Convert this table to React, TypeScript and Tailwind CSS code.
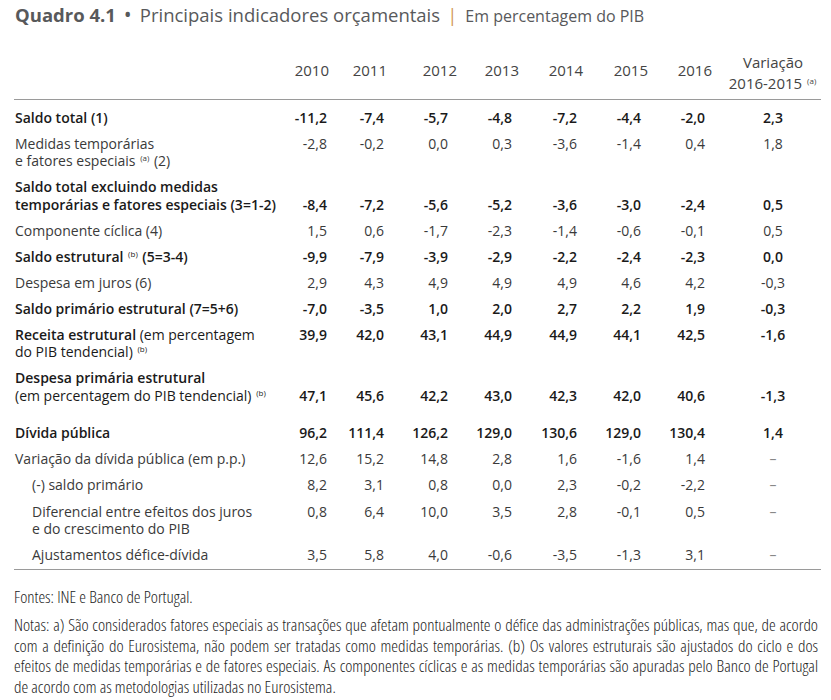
import React from "react";

type Row = {
  label: React.ReactNode;
  vals: string[];
  bold?: boolean;
  bottom?: boolean;
  indent?: boolean;
  gap?: boolean;
};

const Sup = ({ c }: { c: string }) => (
  <span className="relative -top-[5px] text-[8px] leading-none font-normal mx-[1px]">({c})</span>
);

const rows: Row[] = [
  { label: "Saldo total (1)", vals: ["-11,2", "-7,4", "-5,7", "-4,8", "-7,2", "-4,4", "-2,0", "2,3"], bold: true },
  {
    label: (
      <>
        Medidas temporárias
        <br />e fatores especiais <Sup c="a" /> (2)
      </>
    ),
    vals: ["-2,8", "-0,2", "0,0", "0,3", "-3,6", "-1,4", "0,4", "1,8"],
  },
  {
    label: (
      <>
        Saldo total excluindo medidas
        <br />
        temporárias e fatores especiais (3=1-2)
      </>
    ),
    vals: ["-8,4", "-7,2", "-5,6", "-5,2", "-3,6", "-3,0", "-2,4", "0,5"],
    bold: true,
    bottom: true,
  },
  { label: "Componente cíclica (4)", vals: ["1,5", "0,6", "-1,7", "-2,3", "-1,4", "-0,6", "-0,1", "0,5"] },
  {
    label: (
      <>
        Saldo estrutural <Sup c="b" /> (5=3-4)
      </>
    ),
    vals: ["-9,9", "-7,9", "-3,9", "-2,9", "-2,2", "-2,4", "-2,3", "0,0"],
    bold: true,
  },
  { label: "Despesa em juros (6)", vals: ["2,9", "4,3", "4,9", "4,9", "4,9", "4,6", "4,2", "-0,3"] },
  { label: "Saldo primário estrutural (7=5+6)", vals: ["-7,0", "-3,5", "1,0", "2,0", "2,7", "2,2", "1,9", "-0,3"], bold: true },
  {
    label: (
      <>
        Receita estrutural <span className="font-normal">(em percentagem</span>
        <br />
        <span className="font-normal">
          do PIB tendencial) <Sup c="b" />
        </span>
      </>
    ),
    vals: ["39,9", "42,0", "43,1", "44,9", "44,9", "44,1", "42,5", "-1,6"],
    bold: true,
  },
  {
    label: (
      <>
        Despesa primária estrutural
        <br />
        <span className="font-normal">
          (em percentagem do PIB tendencial) <Sup c="b" />
        </span>
      </>
    ),
    vals: ["47,1", "45,6", "42,2", "43,0", "42,3", "42,0", "40,6", "-1,3"],
    bold: true,
    bottom: true,
  },
  { label: "Dívida pública", vals: ["96,2", "111,4", "126,2", "129,0", "130,6", "129,0", "130,4", "1,4"], bold: true, gap: true },
  { label: "Variação da dívida pública (em p.p.)", vals: ["12,6", "15,2", "14,8", "2,8", "1,6", "-1,6", "1,4", "–"] },
  { label: "(-) saldo primário", vals: ["8,2", "3,1", "0,8", "0,0", "2,3", "-0,2", "-2,2", "–"], indent: true },
  {
    label: (
      <>
        Diferencial entre efeitos dos juros
        <br />e do crescimento do PIB
      </>
    ),
    vals: ["0,8", "6,4", "10,0", "3,5", "2,8", "-0,1", "0,5", "–"],
    indent: true,
  },
  { label: "Ajustamentos défice-dívida", vals: ["3,5", "5,8", "4,0", "-0,6", "-3,5", "-1,3", "3,1", "–"], indent: true },
];

const years = ["2010", "2011", "2012", "2013", "2014", "2015", "2016"];
const valPad = ["pr-[2px]", "pr-[3px]", "pr-[9px]", "pr-[7px]", "pr-[6px]", "pr-[7px]", "pr-[7px]"];
const grid = "grid grid-cols-[270px_45px_58px_70px_62px_64px_65px_64px_106px]";

export default function App() {
  return (
    <div className="w-[831px] h-[700px] bg-white text-[#333] font-['Open_Sans',sans-serif] overflow-hidden">
      {/* Title */}
      <div className="pl-[15px] pt-[2px] flex items-baseline text-[18.5px] leading-[24px] text-[#58595b] whitespace-nowrap">
        <span className="font-bold">Quadro 4.1</span>
        <span className="mx-[8px] text-[21px] leading-[24px]">•</span>
        <span>Principais indicadores orçamentais</span>
        <span className="ml-[7px] mr-[8px] text-[#d39a5c]">|</span>
        <span className="text-[16px]">Em percentagem do PIB</span>
      </div>

      <div className="ml-[14px] w-[807px]">
        {/* Header */}
        <div className={`${grid} mt-[24px] pb-[5px] border-b-[1.5px] border-[#9a9a9a] text-[15px] leading-[21px] text-[#444] items-center`}>
          <div />
          {years.map((y) => (
            <div key={y} className="text-right mb-[5px]">
              {y}
            </div>
          ))}
          <div className="text-center pl-[16px] whitespace-nowrap">
            Variação
            <br />
            2016-2015 <Sup c="a" />
          </div>
        </div>

        {/* Body */}
        <div className="pt-[4.5px] pb-[1px] border-b-[1.5px] border-[#9a9a9a] text-[14px] leading-[17.3px]">
          {rows.map((r, i) => (
            <div
              key={i}
              className={`${grid} py-[4.4px] ${r.bottom ? "items-end" : "items-start"} ${
                r.bold ? "font-semibold text-[#1a1a1a]" : "text-[#3a3a3a]"
              } ${r.gap ? "mt-[11.5px]" : ""}`}
            >
              <div className={`whitespace-nowrap ${r.indent ? "pl-[18px]" : "pl-[1px]"}`}>{r.label}</div>
              {r.vals.slice(0, 7).map((v, j) => (
                <div key={j} className={`text-right ${valPad[j]}`}>
                  {v}
                </div>
              ))}
              <div className={`text-center pl-[16px] ${r.vals[7] === "–" ? "text-[#888]" : ""}`}>{r.vals[7]}</div>
            </div>
          ))}
        </div>
      </div>

      {/* Footer */}
      <div className="px-[14px] w-[831px] mt-[17px] text-[17px] leading-[20.6px] text-[#222] font-['Open_Sans',sans-serif] font-stretch-[75%] font-light">
        <p>Fontes: INE e Banco de Portugal.</p>
        <p className="mt-[8px] text-justify w-[804px]">
          Notas: a) São considerados fatores especiais as transações que afetam pontualmente o défice das administrações
          públicas, mas que, de acordo com a definição do Eurosistema, não podem ser tratadas como medidas temporárias. (b)
          Os valores estruturais são ajustados do ciclo e dos efeitos de medidas temporárias e de fatores especiais. As
          componentes cíclicas e as medidas temporárias são apuradas pelo Banco de Portugal de acordo com as metodologias
          utilizadas no Eurosistema.
        </p>
      </div>
    </div>
  );
}
